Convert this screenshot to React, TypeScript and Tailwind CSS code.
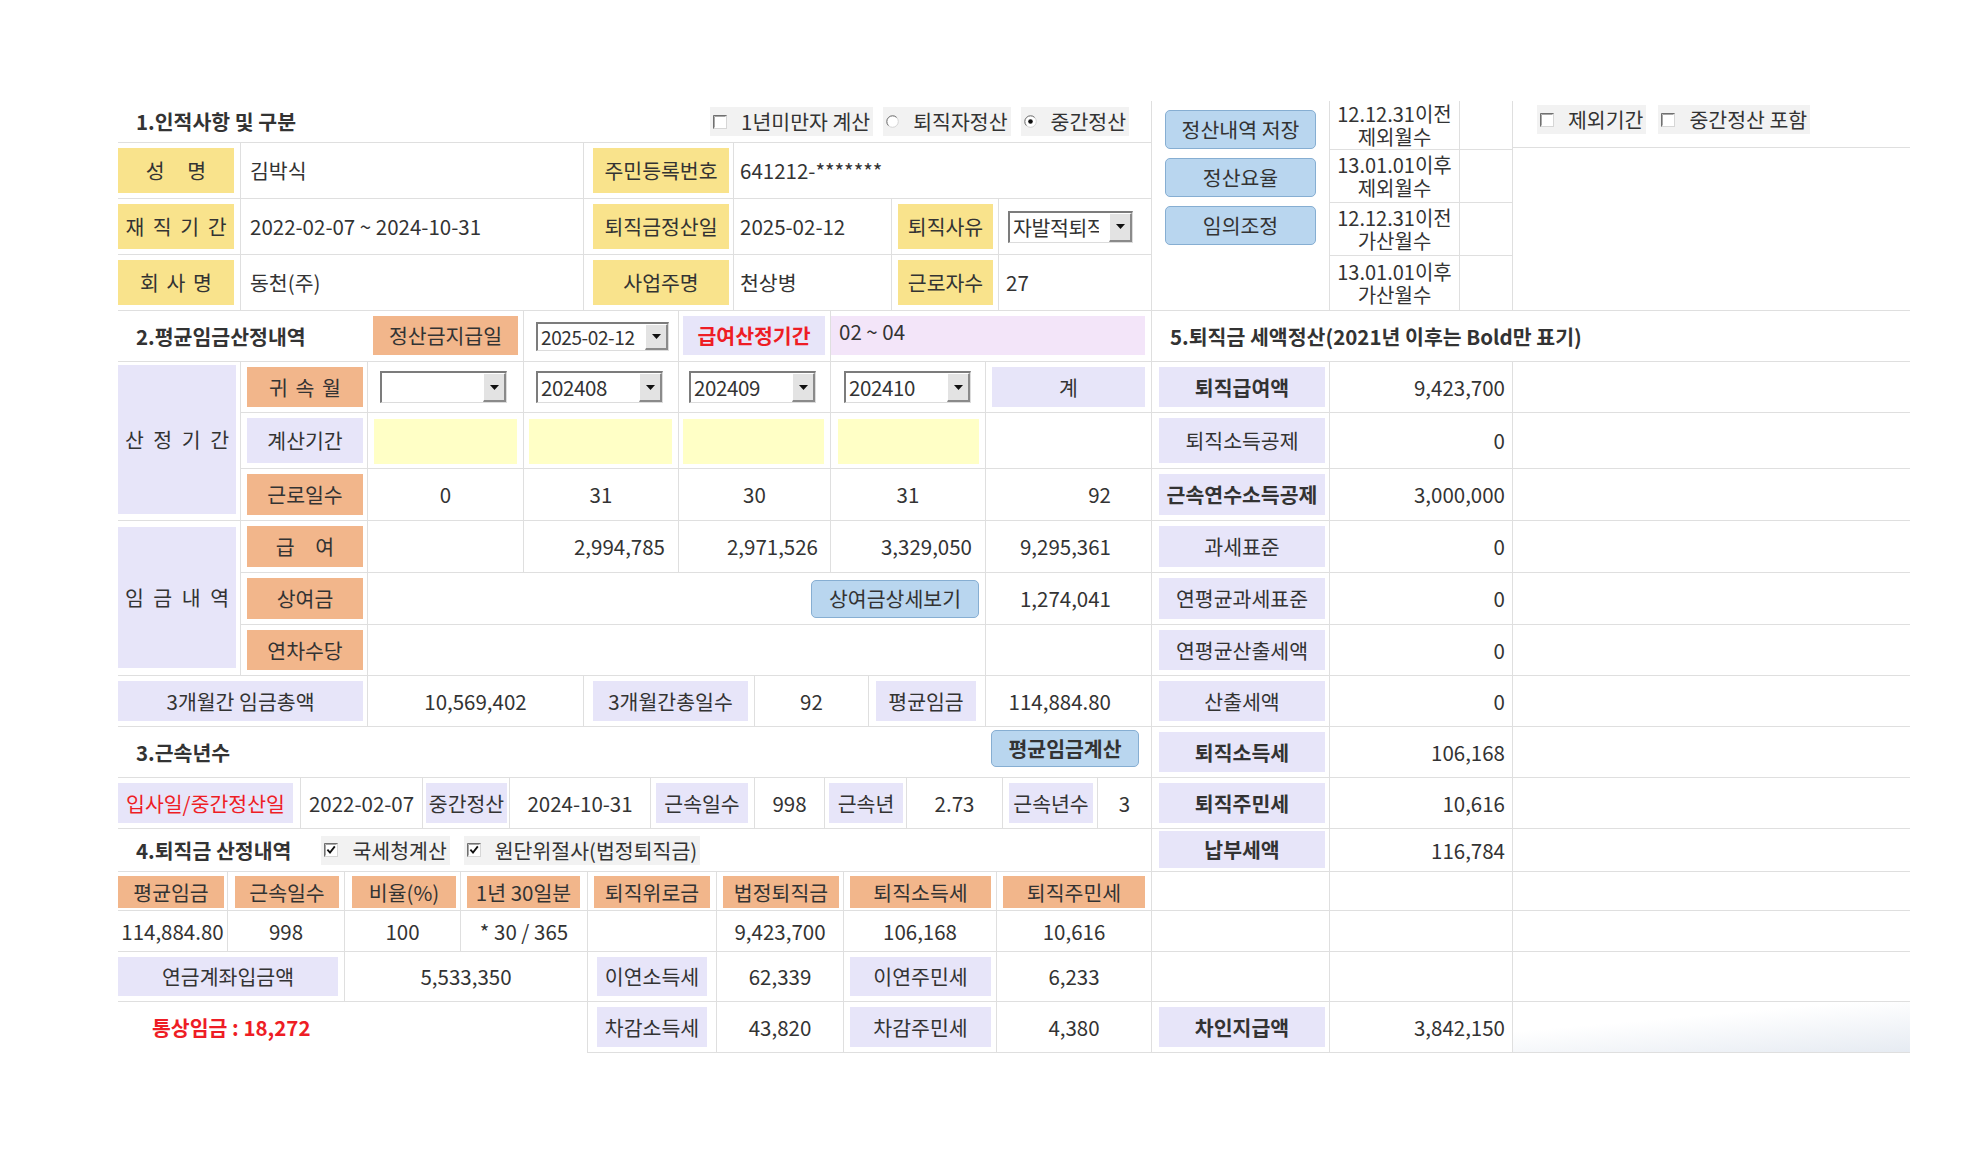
import React from "react";

const LN = "border-[#dfdfdf]";

type P = { className?: string; children?: React.ReactNode };

function Lab({ className = "", children }: P) {
  return (
    <div className={`h-full w-full flex items-center justify-center whitespace-nowrap ${className}`}>
      {children}
    </div>
  );
}

function Btn({ className = "", children }: P) {
  return (
    <div
      className={`flex items-center justify-center rounded-[5px] border border-[#86aed2] bg-[#b9d6ef] whitespace-nowrap ${className}`}
    >
      {children}
    </div>
  );
}

function Sel({ value = "", className = "", textClass = "flex-1 min-w-0" }: { value?: string; className?: string; textClass?: string }) {
  return (
    <div
      className={`flex bg-white border-t-2 border-l-2 border-t-[#7c7c7c] border-l-[#7c7c7c] border-r border-b border-r-[#dcdcdc] border-b-[#dcdcdc] ${className}`}
    >
      <div className={`flex items-center pl-[3px] overflow-hidden whitespace-nowrap tracking-[-0.4px] ${textClass}`}>{value}</div>
      <div className="ml-auto w-[23px] shrink-0 flex items-center justify-center bg-[#e3e3e3] border-t border-l border-t-white border-l-white border-r-2 border-b-2 border-r-[#8a8a8a] border-b-[#8a8a8a]">
        <svg width="9" height="5" viewBox="0 0 9 5">
          <path d="M0 0H9L4.5 5Z" fill="#111" />
        </svg>
      </div>
    </div>
  );
}

function Chk({ on = false }: { on?: boolean }) {
  return (
    <svg width="14" height="14" viewBox="0 0 14 14" className="shrink-0">
      <rect x="0.5" y="0.5" width="13" height="13" fill="#fff" stroke="#d6d6d6" />
      <path d="M0.5 13.5V0.5H13.5" fill="none" stroke="#707070" />
      <path d="M1.5 12.5V1.5H12.5" fill="none" stroke="#a8a8a8" />
      {on && <path d="M3.4 6.6L6 9.6L10.8 3.4" fill="none" stroke="#111" strokeWidth="1.8" />}
    </svg>
  );
}

function Radio({ on = false }: { on?: boolean }) {
  return (
    <svg width="13" height="13" viewBox="0 0 13 13" className="shrink-0">
      <circle cx="6.5" cy="6.5" r="5.8" fill="#fff" stroke="#d4d4d4" />
      <path d="M2.4 10.6A5.8 5.8 0 0 1 10.6 2.4" fill="none" stroke="#747474" />
      {on && <circle cx="6.5" cy="6.5" r="2.3" fill="#111" />}
    </svg>
  );
}

function Ctl({ className = "", children }: P) {
  return (
    <div className={`flex items-center gap-[14px] h-[29px] px-[3px] bg-[#f2f2f2] whitespace-nowrap ${className}`}>
      {children}
    </div>
  );
}

const months: [string, string][] = [
  ["12.12.31이전", "제외월수"],
  ["13.01.01이후", "제외월수"],
  ["12.12.31이전", "가산월수"],
  ["13.01.01이후", "가산월수"],
];

const rightRows: { label: string; value: string; bold: boolean; h: string; pad: string }[] = [
  { label: "퇴직급여액", value: "9,423,700", bold: true, h: "h-[51px]", pad: "py-[5px]" },
  { label: "퇴직소득공제", value: "0", bold: false, h: "h-[56px]", pad: "py-[5px]" },
  { label: "근속연수소득공제", value: "3,000,000", bold: true, h: "h-[52px]", pad: "py-[5px]" },
  { label: "과세표준", value: "0", bold: false, h: "h-[52px]", pad: "py-[5px]" },
  { label: "연평균과세표준", value: "0", bold: false, h: "h-[52px]", pad: "py-[5px]" },
  { label: "연평균산출세액", value: "0", bold: false, h: "h-[51px]", pad: "py-[5px]" },
  { label: "산출세액", value: "0", bold: false, h: "h-[51px]", pad: "py-[5px]" },
  { label: "퇴직소득세", value: "106,168", bold: true, h: "h-[51px]", pad: "py-[5px]" },
  { label: "퇴직주민세", value: "10,616", bold: true, h: "h-[51px]", pad: "py-[5px]" },
  { label: "납부세액", value: "116,784", bold: true, h: "h-[43px]", pad: "pt-[2px] pb-[3px]" },
  { label: "", value: "", bold: false, h: "h-[39px]", pad: "py-[5px]" },
  { label: "", value: "", bold: false, h: "h-[41px]", pad: "py-[5px]" },
  { label: "", value: "", bold: false, h: "h-[50px]", pad: "py-[5px]" },
  { label: "차인지급액", value: "3,842,150", bold: true, h: "h-[51px]", pad: "py-[5px]" },
];

const SAL = "bg-[#f2b68b]";
const LAV = "bg-[#e7e5f9]";
const YEL = "bg-[#f9e38c]";

export default function App() {
  return (
    <div className="w-[1980px] h-[1150px] bg-white text-[#333] text-[20.5px] leading-none font-['Noto_Sans_CJK_KR','Noto_Sans',sans-serif] pt-[101px] pl-[118px]">
      <div className="w-[1792px]">
        {/* ================= Section 1 ================= */}
        <div className={`flex h-[210px] border-b ${LN}`}>
          <div className={`w-[1034px] shrink-0 border-r ${LN} flex flex-col`}>
            <div className={`h-[42px] flex items-center justify-between pl-[18px] pr-[22px] border-b ${LN}`}>
              <span className="font-bold">1.인적사항 및 구분</span>
              <div className="flex items-center gap-[10px]">
                <Ctl>
                  <Chk />
                  1년미만자 계산
                </Ctl>
                <Ctl>
                  <Radio />
                  퇴직자정산
                </Ctl>
                <Ctl>
                  <Radio on />
                  중간정산
                </Ctl>
              </div>
            </div>
            <div className={`grid grid-cols-[123px_343px_150px_158px_107px_1fr] h-[56px] border-b ${LN}`}>
              <div className={`border-r ${LN} py-[5px] pr-[6px]`}>
                <Lab className={`${YEL} [word-spacing:18px]`}>성 명</Lab>
              </div>
              <div className={`border-r ${LN} flex items-center pl-[9px]`}>김박식</div>
              <div className={`border-r ${LN} py-[5px] pl-[9px] pr-[4px]`}>
                <Lab className={YEL}>주민등록번호</Lab>
              </div>
              <div className="col-span-3 flex items-center pl-[6px]">641212-*******</div>
            </div>
            <div className={`grid grid-cols-[123px_343px_150px_158px_107px_1fr] h-[56px] border-b ${LN}`}>
              <div className={`border-r ${LN} py-[5px] pr-[6px]`}>
                <Lab className={`${YEL} [word-spacing:4px]`}>재 직 기 간</Lab>
              </div>
              <div className={`border-r ${LN} flex items-center pl-[9px]`}>2022-02-07 ~ 2024-10-31</div>
              <div className={`border-r ${LN} py-[5px] pl-[9px] pr-[4px]`}>
                <Lab className={YEL}>퇴직금정산일</Lab>
              </div>
              <div className={`border-r ${LN} flex items-center pl-[6px]`}>2025-02-12</div>
              <div className={`border-r ${LN} py-[5px] pl-[6px] pr-[5px]`}>
                <Lab className={YEL}>퇴직사유</Lab>
              </div>
              <div className="flex items-center pl-[9px]">
                <Sel value="자발적퇴직" className="w-[125px] h-[32px]" textClass="w-[89px]" />
              </div>
            </div>
            <div className="grid grid-cols-[123px_343px_150px_158px_107px_1fr] flex-1">
              <div className={`border-r ${LN} py-[5px] pr-[6px]`}>
                <Lab className={`${YEL} [word-spacing:3px]`}>회 사 명</Lab>
              </div>
              <div className={`border-r ${LN} flex items-center pl-[9px]`}>동천(주)</div>
              <div className={`border-r ${LN} py-[5px] pl-[9px] pr-[4px]`}>
                <Lab className={YEL}>사업주명</Lab>
              </div>
              <div className={`border-r ${LN} flex items-center pl-[6px]`}>천상병</div>
              <div className={`border-r ${LN} py-[5px] pl-[6px] pr-[5px]`}>
                <Lab className={YEL}>근로자수</Lab>
              </div>
              <div className="flex items-center pl-[7px]">27</div>
            </div>
          </div>

          <div className="flex-1 flex">
            <div className="w-[177px] shrink-0 flex flex-col items-center pt-[9px] gap-[9px]">
              <Btn className="w-[151px] h-[39px]">정산내역 저장</Btn>
              <Btn className="w-[151px] h-[39px]">정산요율</Btn>
              <Btn className="w-[151px] h-[39px]">임의조정</Btn>
            </div>
            <div className={`w-[184px] shrink-0 grid grid-cols-[130px_1fr] grid-rows-[49px_53px_53px_1fr] border-l border-r ${LN}`}>
              {months.map((m, i) => (
                <React.Fragment key={i}>
                  <div
                    className={`flex flex-col items-center justify-center leading-[23px] text-[20px] whitespace-nowrap border-r ${LN} ${i < 3 ? "border-b" : ""}`}
                  >
                    <div>{m[0]}</div>
                    <div>{m[1]}</div>
                  </div>
                  <div className={`${LN} ${i < 3 ? "border-b" : ""}`} />
                </React.Fragment>
              ))}
            </div>
            <div className="flex-1">
              <div className={`h-[47px] border-b ${LN} flex items-start pt-[4px] pl-[24px] gap-[12px]`}>
                <Ctl>
                  <Chk />
                  제외기간
                </Ctl>
                <Ctl>
                  <Chk />
                  중간정산 포함
                </Ctl>
              </div>
            </div>
          </div>
        </div>

        {/* ================= Sections 2-5 ================= */}
        <div className="flex">
          {/* ---------- left ---------- */}
          <div className={`w-[1034px] shrink-0 border-r ${LN}`}>
            {/* 2 title row */}
            <div className={`grid grid-cols-[250px_156px_155px_152px_1fr] h-[51px] border-b ${LN}`}>
              <div className="flex items-center pl-[18px] font-bold whitespace-nowrap">2.평균임금산정내역</div>
              <div className={`border-r ${LN} pt-[5px] pb-[6px] px-[5px]`}>
                <Lab className={SAL}>정산금지급일</Lab>
              </div>
              <div className={`border-r ${LN} flex items-center pl-[12px]`}>
                <Sel value="2025-02-12" className="w-[133px] h-[29px]" textClass="flex-1 min-w-0 text-[19px]" />
              </div>
              <div className={`border-r ${LN} pt-[5px] pb-[6px] pl-[4px] pr-[5px]`}>
                <Lab className={`${LAV} text-[#ee1d25] font-bold`}>급여산정기간</Lab>
              </div>
              <div className="pt-[5px] pb-[6px] pr-[6px]">
                <div className="h-full bg-[#f3e5f9] pl-[8px] pt-[5px]">02 ~ 04</div>
              </div>
            </div>

            {/* 2 main grid */}
            <div className="grid grid-cols-[123px_127px_156px_155px_152px_155px_1fr] grid-rows-[51px_56px_52px_52px_52px_51px]">
              {/* row 귀속월 */}
              <div className={`row-span-3 border-r border-b ${LN} pt-[3px] pb-[6px] pr-[4px]`}>
                <Lab className={`${LAV} [word-spacing:5px]`}>산 정 기 간</Lab>
              </div>
              <div className={`border-r border-b ${LN} py-[5px] pl-[6px] pr-[4px]`}>
                <Lab className={`${SAL} [word-spacing:3px]`}>귀 속 월</Lab>
              </div>
              <div className={`border-r border-b ${LN} flex items-center pl-[12px]`}>
                <Sel value="" className="w-[127px] h-[32px]" />
              </div>
              <div className={`border-r border-b ${LN} flex items-center pl-[12px]`}>
                <Sel value="202408" className="w-[127px] h-[32px]" />
              </div>
              <div className={`border-r border-b ${LN} flex items-center pl-[10px]`}>
                <Sel value="202409" className="w-[127px] h-[32px]" />
              </div>
              <div className={`border-r border-b ${LN} flex items-center pl-[13px]`}>
                <Sel value="202410" className="w-[127px] h-[32px]" />
              </div>
              <div className={`border-b ${LN} py-[5px] px-[6px]`}>
                <Lab className={LAV}>계</Lab>
              </div>

              {/* row 계산기간 */}
              <div className={`border-r border-b ${LN} py-[5px] pl-[6px] pr-[4px]`}>
                <Lab className={LAV}>계산기간</Lab>
              </div>
              <div className={`border-r border-b ${LN} pt-[6px] pb-[4px] pl-[6px] pr-[6px]`}>
                <div className="h-full bg-[#ffffc6]" />
              </div>
              <div className={`border-r border-b ${LN} pt-[6px] pb-[4px] pl-[5px] pr-[6px]`}>
                <div className="h-full bg-[#ffffc6]" />
              </div>
              <div className={`border-r border-b ${LN} pt-[6px] pb-[4px] pl-[4px] pr-[6px]`}>
                <div className="h-full bg-[#ffffc6]" />
              </div>
              <div className={`border-r border-b ${LN} pt-[6px] pb-[4px] pl-[7px] pr-[6px]`}>
                <div className="h-full bg-[#ffffc6]" />
              </div>
              <div className={`border-b ${LN}`} />

              {/* row 근로일수 */}
              <div className={`border-r border-b ${LN} py-[5px] pl-[6px] pr-[4px]`}>
                <Lab className={SAL}>근로일수</Lab>
              </div>
              <div className={`border-r border-b ${LN} flex items-center justify-center`}>0</div>
              <div className={`border-r border-b ${LN} flex items-center justify-center`}>31</div>
              <div className={`border-r border-b ${LN} flex items-center justify-center`}>30</div>
              <div className={`border-r border-b ${LN} flex items-center justify-center`}>31</div>
              <div className={`border-b ${LN} flex items-center justify-end pr-[40px]`}>92</div>

              {/* row 급여 */}
              <div className={`row-span-3 border-r border-b ${LN} pt-[6px] pb-[7px] pr-[4px]`}>
                <Lab className={`${LAV} [word-spacing:5px]`}>임 금 내 역</Lab>
              </div>
              <div className={`border-r border-b ${LN} py-[5px] pl-[6px] pr-[4px]`}>
                <Lab className={`${SAL} [word-spacing:16px]`}>급 여</Lab>
              </div>
              <div className={`border-r border-b ${LN}`} />
              <div className={`border-r border-b ${LN} flex items-center justify-end pr-[13px]`}>2,994,785</div>
              <div className={`border-r border-b ${LN} flex items-center justify-end pr-[12px]`}>2,971,526</div>
              <div className={`border-r border-b ${LN} flex items-center justify-end pr-[13px]`}>3,329,050</div>
              <div className={`border-b ${LN} flex items-center justify-end pr-[40px]`}>9,295,361</div>

              {/* row 상여금 */}
              <div className={`border-r border-b ${LN} py-[5px] pl-[6px] pr-[4px]`}>
                <Lab className={SAL}>상여금</Lab>
              </div>
              <div className={`col-span-4 border-r border-b ${LN} flex items-center justify-end pr-[6px]`}>
                <Btn className="w-[168px] h-[38px]">상여금상세보기</Btn>
              </div>
              <div className={`border-b ${LN} flex items-center justify-end pr-[40px]`}>1,274,041</div>

              {/* row 연차수당 */}
              <div className={`border-r border-b ${LN} py-[5px] pl-[6px] pr-[4px]`}>
                <Lab className={SAL}>연차수당</Lab>
              </div>
              <div className={`col-span-4 border-r border-b ${LN}`} />
              <div className={`border-b ${LN}`} />
            </div>

            {/* 3개월간 row */}
            <div className={`grid grid-cols-[250px_216px_171px_114px_117px_1fr] h-[51px] border-b ${LN}`}>
              <div className={`border-r ${LN} py-[5px] pr-[4px]`}>
                <Lab className={LAV}>3개월간 임금총액</Lab>
              </div>
              <div className={`border-r ${LN} flex items-center justify-center`}>10,569,402</div>
              <div className={`border-r ${LN} py-[5px] pl-[9px] pr-[6px]`}>
                <Lab className={LAV}>3개월간총일수</Lab>
              </div>
              <div className={`border-r ${LN} flex items-center justify-center`}>92</div>
              <div className={`border-r ${LN} py-[5px] pl-[7px] pr-[9px]`}>
                <Lab className={LAV}>평균임금</Lab>
              </div>
              <div className="flex items-center justify-end pr-[40px]">114,884.80</div>
            </div>

            {/* 3 title row */}
            <div className={`h-[51px] border-b ${LN} flex items-start justify-between pl-[18px] pr-[12px]`}>
              <span className="font-bold self-center">3.근속년수</span>
              <Btn className="w-[148px] h-[37px] mt-[3px] font-bold">평균임금계산</Btn>
            </div>

            {/* 3 data row */}
            <div className={`grid grid-cols-[183px_122px_87px_141px_104px_70px_82px_96px_95px_1fr] h-[51px] border-b ${LN}`}>
              <div className={`border-r ${LN} py-[5px] pr-[7px]`}>
                <Lab className={`${LAV} text-[#ee1d25]`}>입사일/중간정산일</Lab>
              </div>
              <div className={`border-r ${LN} flex items-center justify-center`}>2022-02-07</div>
              <div className={`border-r ${LN} py-[5px] pl-[3px] pr-[2px]`}>
                <Lab className={LAV}>중간정산</Lab>
              </div>
              <div className={`border-r ${LN} flex items-center justify-center`}>2024-10-31</div>
              <div className={`border-r ${LN} py-[5px] pl-[5px] pr-[6px]`}>
                <Lab className={LAV}>근속일수</Lab>
              </div>
              <div className={`border-r ${LN} flex items-center justify-center`}>998</div>
              <div className={`border-r ${LN} py-[5px] pl-[4px] pr-[3px]`}>
                <Lab className={LAV}>근속년</Lab>
              </div>
              <div className={`border-r ${LN} flex items-center justify-center`}>2.73</div>
              <div className={`border-r ${LN} py-[5px] pl-[6px] pr-[4px]`}>
                <Lab className={LAV}>근속년수</Lab>
              </div>
              <div className="flex items-center justify-center">3</div>
            </div>

            {/* 4 title row */}
            <div className={`h-[43px] border-b ${LN} flex items-center pl-[18px]`}>
              <span className="font-bold whitespace-nowrap">4.퇴직금 산정내역</span>
              <Ctl className="ml-[30px]">
                <Chk on />
                국세청계산
              </Ctl>
              <Ctl className="ml-[14px]">
                <Chk on />
                원단위절사(법정퇴직금)
              </Ctl>
            </div>

            {/* 4 header row */}
            <div className={`grid grid-cols-[110px_117px_116px_127px_129px_127px_153px_1fr] h-[39px] border-b ${LN}`}>
              {[
                ["평균임금", "pl-0 pr-[3px]"],
                ["근속일수", "pl-[7px] pr-[5px]"],
                ["비율(%)", "pl-[7px] pr-[4px]"],
                ["1년 30일분", "pl-[6px] pr-[7px]"],
                ["퇴직위로금", "pl-[6px] pr-[6px]"],
                ["법정퇴직금", "pl-[6px] pr-[4px]"],
                ["퇴직소득세", "pl-[6px] pr-[5px]"],
                ["퇴직주민세", "pl-[6px] pr-[6px]"],
              ].map(([t, pad], i) => (
                <div key={i} className={`${i < 7 ? "border-r" : ""} ${LN} pt-[4px] pb-[2px] ${pad}`}>
                  <Lab className={SAL}>{t}</Lab>
                </div>
              ))}
            </div>

            {/* 4 value row */}
            <div className={`grid grid-cols-[110px_117px_116px_127px_129px_127px_153px_1fr] h-[41px] border-b ${LN}`}>
              {["114,884.80", "998", "100", "* 30 / 365", "", "9,423,700", "106,168", "10,616"].map((t, i) => (
                <div
                  key={i}
                  className={`${i < 7 ? "border-r" : ""} ${LN} flex items-center justify-center whitespace-nowrap`}
                >
                  {t}
                </div>
              ))}
            </div>

            {/* 연금계좌 row */}
            <div className={`grid grid-cols-[227px_243px_129px_127px_153px_1fr] h-[50px] border-b ${LN}`}>
              <div className={`border-r ${LN} py-[5px] pr-[6px]`}>
                <Lab className={LAV}>연금계좌입금액</Lab>
              </div>
              <div className={`border-r ${LN} flex items-center justify-center`}>5,533,350</div>
              <div className={`border-r ${LN} py-[5px] px-[9px]`}>
                <Lab className={LAV}>이연소득세</Lab>
              </div>
              <div className={`border-r ${LN} flex items-center justify-center`}>62,339</div>
              <div className={`border-r ${LN} py-[5px] pl-[6px] pr-[5px]`}>
                <Lab className={LAV}>이연주민세</Lab>
              </div>
              <div className="flex items-center justify-center">6,233</div>
            </div>

            {/* 통상임금 row */}
            <div className="grid grid-cols-[470px_129px_127px_153px_1fr] h-[51px]">
              <div className={`border-r ${LN} flex items-center pl-[34px] text-[#ee1d25] font-bold`}>
                통상임금 : 18,272
              </div>
              <div className={`border-r border-b ${LN} py-[5px] px-[9px]`}>
                <Lab className={LAV}>차감소득세</Lab>
              </div>
              <div className={`border-r border-b ${LN} flex items-center justify-center`}>43,820</div>
              <div className={`border-r border-b ${LN} py-[5px] pl-[6px] pr-[5px]`}>
                <Lab className={LAV}>차감주민세</Lab>
              </div>
              <div className={`border-b ${LN} flex items-center justify-center`}>4,380</div>
            </div>
          </div>

          {/* ---------- right (section 5) ---------- */}
          <div className="flex-1 flex flex-col">
            <div className={`h-[51px] border-b ${LN} flex items-center pl-[18px] font-bold whitespace-nowrap`}>
              5.퇴직금 세액정산(2021년 이후는 Bold만 표기)
            </div>
            {rightRows.map((r, i) => (
              <div key={i} className={`grid grid-cols-[178px_183px_1fr] border-b ${LN} ${r.h}`}>
                <div className={`border-r ${LN} pl-[7px] pr-[4px] ${r.pad}`}>
                  {r.label && <Lab className={`${LAV} ${r.bold ? "font-bold" : ""}`}>{r.label}</Lab>}
                </div>
                <div className={`border-r ${LN} flex items-center justify-end pr-[7px]`}>{r.value}</div>
                <div
                  className={
                    i === rightRows.length - 1
                      ? "bg-[linear-gradient(175deg,#ffffff_35%,#e6ebf2_100%)]"
                      : ""
                  }
                />
              </div>
            ))}
          </div>
        </div>
      </div>
    </div>
  );
}
